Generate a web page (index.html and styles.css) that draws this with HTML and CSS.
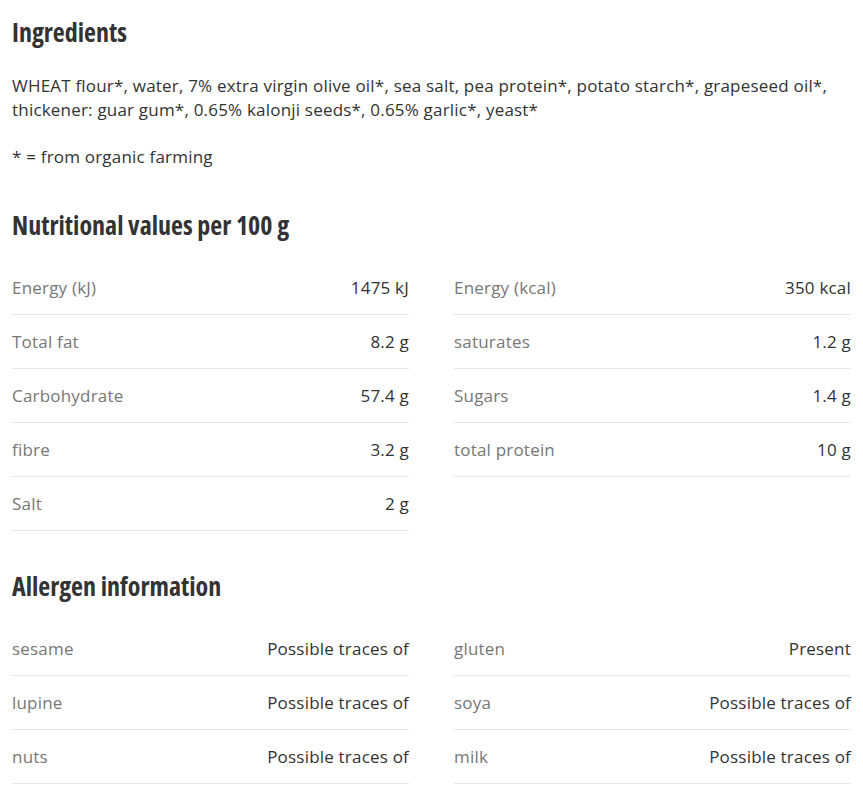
FILE: index.html
```html
<!DOCTYPE html>
<html>
    <head>
        <title>Product details</title>
        <link rel="stylesheet" href="styles.css">
    </head>
<body>
    <section class="block">
        <h2 class="title">Ingredients</h2>
        <p class="text">WHEAT flour*, water, 7% extra virgin olive oil*, sea salt, pea protein*, potato starch*, grapeseed oil*, thickener: guar gum*, 0.65% kalonji seeds*, 0.65% garlic*, yeast*</p>
        <p class="text">* = from organic farming</p>
    </section>

    <section class="block">
        <h2 class="title">Nutritional values per 100 g</h2>
        <div class="facts">
            <div class="row"><span class="label">Energy (kJ)</span><span class="value">1475 kJ</span></div>
            <div class="row"><span class="label">Energy (kcal)</span><span class="value">350 kcal</span></div>
            <div class="row"><span class="label">Total fat</span><span class="value">8.2 g</span></div>
            <div class="row"><span class="label">saturates</span><span class="value">1.2 g</span></div>
            <div class="row"><span class="label">Carbohydrate</span><span class="value">57.4 g</span></div>
            <div class="row"><span class="label">Sugars</span><span class="value">1.4 g</span></div>
            <div class="row"><span class="label">fibre</span><span class="value">3.2 g</span></div>
            <div class="row"><span class="label">total protein</span><span class="value">10 g</span></div>
            <div class="row"><span class="label">Salt</span><span class="value">2 g</span></div>
        </div>
    </section>

    <section class="block">
        <h2 class="title">Allergen information</h2>
        <div class="facts">
            <div class="row"><span class="label">sesame</span><span class="value">Possible traces of</span></div>
            <div class="row"><span class="label">gluten</span><span class="value">Present</span></div>
            <div class="row"><span class="label">lupine</span><span class="value">Possible traces of</span></div>
            <div class="row"><span class="label">soya</span><span class="value">Possible traces of</span></div>
            <div class="row"><span class="label">nuts</span><span class="value">Possible traces of</span></div>
            <div class="row"><span class="label">milk</span><span class="value">Possible traces of</span></div>
        </div>
    </section>
</body>
</html>
```

FILE: styles.css
```css
body {
    font-family: "Open Sans", "Noto Sans", sans-serif;
    font-size: 17px;
    letter-spacing: 0.2px;
    color: #333;
    background-color: #fff;
    margin: 0;
    padding: 0 12px;
}

.block {
    margin-top: 39px;
}

.block:first-child {
    margin-top: 16px;
}

.block:nth-child(2) {
    margin-top: 40px;
}

.title {
    font-family: "Open Sans", sans-serif;
    font-stretch: condensed;
    font-size: 26px;
    line-height: 32px;
    font-weight: 700;
    letter-spacing: 0;
    color: #333;
    margin: 0 0 20px 0;
}

.block:first-child .title {
    margin-bottom: 26px;
}

.text {
    line-height: 24px;
    margin: 0 0 23px 0;
}

.text:last-child {
    margin-bottom: 0;
}

.facts {
    display: grid;
    grid-template-columns: 1fr 1fr;
    column-gap: 45px;
}

.row {
    display: flex;
    justify-content: space-between;
    line-height: 24px;
    padding: 15px 0 14px 0;
    border-bottom: 1px solid #e6e6e6;
}

.label {
    color: #777;
}

.value {
    color: #333;
}
```
